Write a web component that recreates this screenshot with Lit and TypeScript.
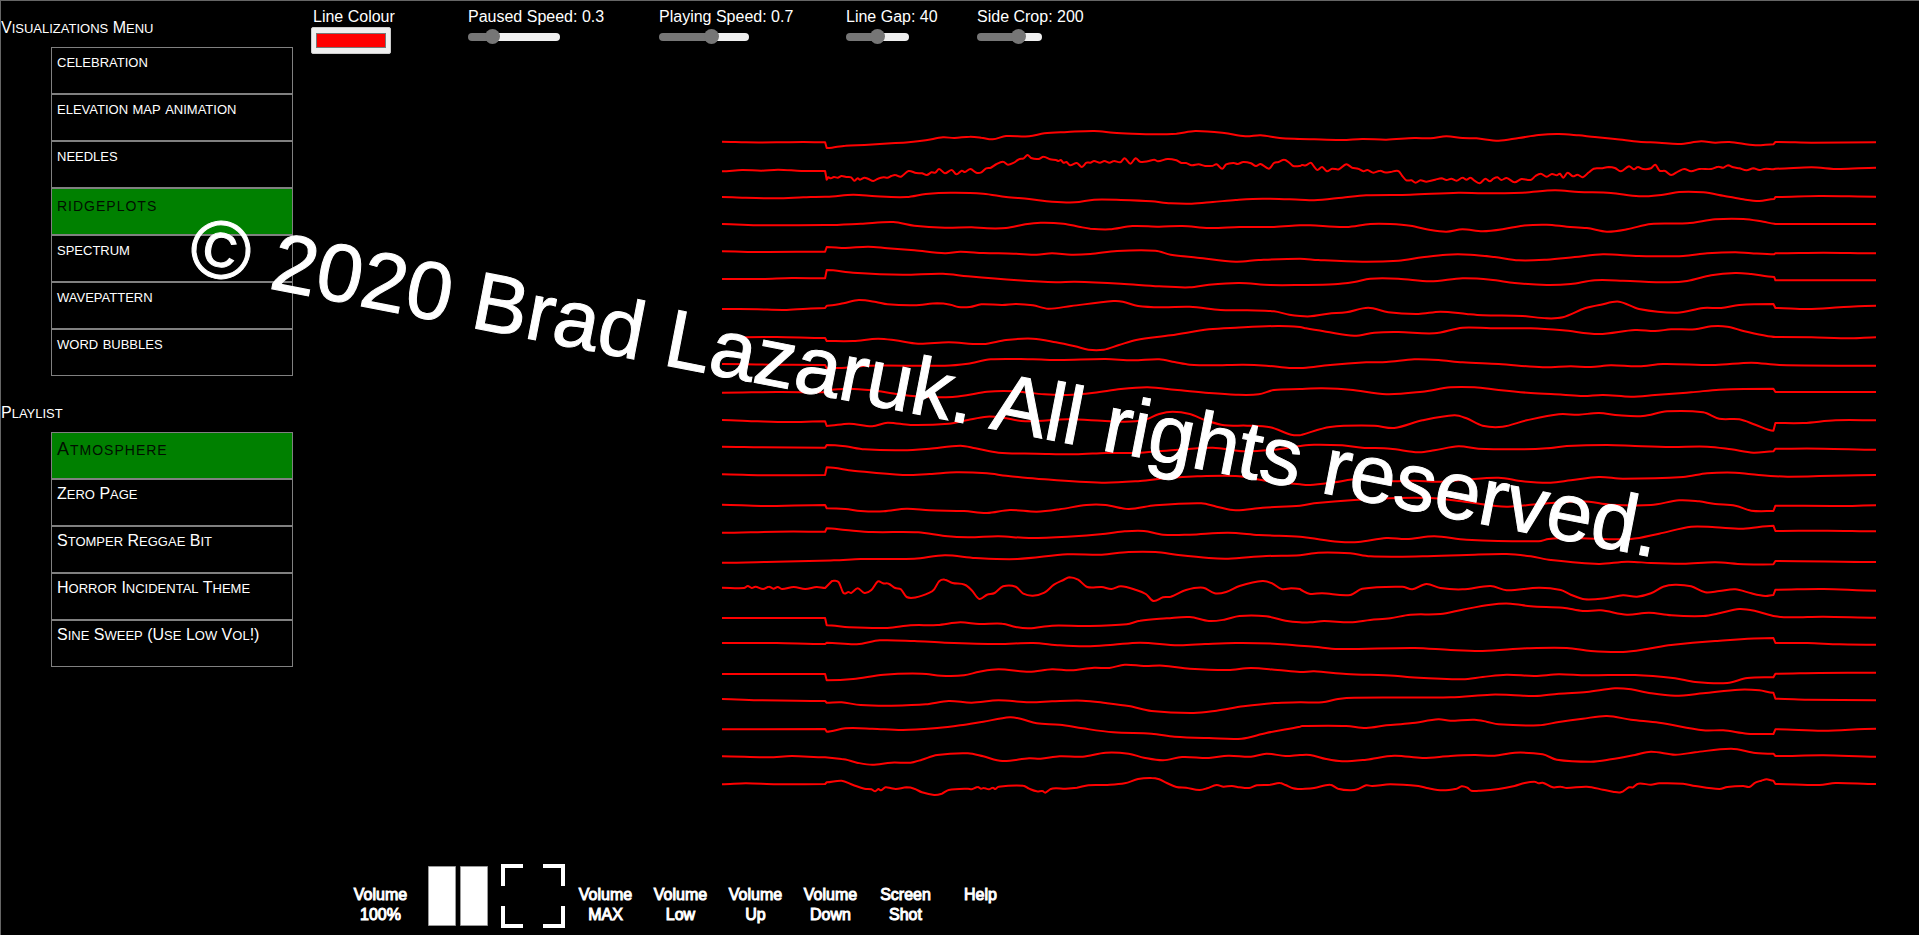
import { LitElement, html, svg, css } from "lit";
import { customElement, property, state } from "lit/decorators.js";
import { classMap } from "lit/directives/class-map.js";

interface Trace {
  top: number;
  a: string;
  b: string;
}

interface Slider {
  id: string;
  label: string;
  min: number;
  max: number;
  step: number;
  value: number;
}

/* Samples of each ridge: "a" is the first half, "b" the second; "|" marks a hard edge of the crop. */
const TRACES: Trace[] = [
  { top: 110,
    a: "57,95 120,97 200,97 270,96 327,97 | 331,114 345,113 380,107 430,105 500,100 545,97 590,91 635,82 665,84 705,80 735,83 765,88 800,78 860,79 900,70 960,66 1030,63 1080,68 1130,71 1190,73 1245,71 1295,63 1370,69 1425,79 1465,76 1515,84 1568,87",
    b: "60,88 130,90 180,87 240,89 310,84 350,85 390,79 430,84 465,85 520,92 570,84 620,75 670,72 720,76 760,81 810,87 870,95 920,98 970,102 1025,94 1060,98 1095,96 1160,106 1205,103 | 1210,96 1300,98 1461,97" },
  { top: 110,
    a: "57,184 110,180 160,182 205,179 265,183 327,183 | 331,209 335,202 342,205 350,201 360,203 370,198 382,201 395,202 403,212 412,205 418,209 430,203 440,207 453,213 465,206 480,202 490,203 500,198 510,195 525,200 545,183 565,189 580,190 593,195 605,187 615,188 625,177 640,190 658,180 670,193 684,182 692,186 707,177 722,188 735,187 748,175 760,173 775,162 792,155 805,164 820,158 833,148 846,145 856,135 865,144 885,147 898,140 915,148 930,150 937,153 943,150 950,158 958,156 967,166 985,159 998,171 1010,158 1020,158 1030,153 1045,158 1057,153 1070,158 1082,153 1098,157 1110,145 1125,161 1138,145 1150,155 1170,154 1187,149 1197,154 1222,147 1245,151 1258,159 1270,159 1285,166 1303,163 1320,168 1340,167 1350,163 1365,176 1375,163 1395,159 1405,162 1420,156 1440,160 1453,168 1465,162 1487,176 1500,159 1512,156 1527,149 1540,158 1550,168 1568,168",
    b: "30,165 40,166 52,158 60,170 68,180 80,171 92,184 105,176 122,178 140,163 155,173 170,176 183,184 193,180 208,188 225,182 235,187 250,186 270,183 280,198 290,211 303,211 313,218 325,211 340,215 362,209 378,205 390,210 402,206 415,212 430,203 440,209 450,203 460,212 473,220 487,206 498,214 507,206 517,202 527,210 540,204 560,217 577,207 600,210 612,198 625,191 640,200 653,192 665,196 673,191 681,203 692,188 705,199 717,194 730,202 745,187 757,176 775,175 795,171 810,174 825,184 845,169 857,178 867,171 880,177 900,175 911,164 921,182 935,183 950,195 968,184 983,177 1000,184 1020,177 1050,177 1068,170 1080,173 1092,166 1105,172 1120,175 1138,181 1155,175 1170,180 1185,176 1205,178 | 1210,176 1300,172 1370,177 1461,173" },
  { top: 110,
    a: "57,261 120,263 200,265 270,262 327,260 | 331,260 400,254 460,259 540,261 590,252 655,248 740,251 800,261 860,267 920,275 980,277 1030,269 1100,270 1180,274 1230,280 1285,281 1340,276 1400,270 1470,266 1568,269",
    b: "60,271 130,263 190,256 300,254 420,248 480,250 580,248 660,241 720,246 800,249 870,259 930,254 970,246 1030,247 1080,257 1130,268 1170,273 1207,267 | 1210,261 1320,258 1461,260" },
  { top: 110,
    a: "57,342 160,346 327,345 | 331,345 420,341 505,336 560,347 640,353 710,352 750,355 800,354 850,343 890,338 950,341 990,350 1020,356 1070,358 1130,348 1200,350 1260,348 1330,354 1410,351 1500,351 1568,346",
    b: "50,346 140,351 200,342 250,342 300,347 350,360 390,365 430,358 480,364 530,358 580,347 640,344 690,350 740,354 790,365 840,358 900,342 990,340 1060,328 1130,327 1180,335 1207,341 | 1210,342 1461,342" },
  { top: 110,
    a: "57,424 160,426 327,425 | 331,411 380,414 440,410 490,415 560,421 640,430 680,425 740,429 820,431 880,434 920,430 970,434 1020,432 1090,423 1190,422 1230,434 1300,443 1400,455 1460,450 1568,446",
    b: "70,450 180,455 270,452 330,442 390,434 450,434 510,441 570,451 640,449 710,441 780,433 870,438 980,438 1040,430 1110,427 1150,430 1207,433 | 1210,430 1330,428 1461,430" },
  { top: 110,
    a: "57,507 160,507 240,504 327,505 | 331,480 400,488 530,494 635,491 700,499 830,511 930,517 980,515 1100,521 1200,529 1280,532 1330,524 1410,519 1490,525 1568,525",
    b: "110,523 160,516 200,506 270,506 350,514 430,505 500,509 560,519 640,525 700,522 760,511 830,512 940,517 990,513 1050,496 1110,489 1150,492 1207,501 | 1210,511 1461,511" },
  { top: 110,
    a: "57,597 150,598 220,600 280,596 327,594 | 331,587 375,580 415,570 460,576 490,583 560,586 620,580 655,584 675,591 705,591 735,583 790,585 825,582 870,586 910,596 970,588 1080,573 1105,575 1145,588 1210,592 1280,590 1360,600 1430,601 1500,604 1540,614 1568,618",
    b: "50,619 95,611 140,607 195,593 245,607 320,612 375,605 440,612 480,616 580,618 640,625 680,622 735,595 775,584 820,575 870,597 965,608 1030,594 1075,594 1120,585 1205,582 | 1210,594 1290,597 1370,592 1461,587" },
  { top: 110,
    a: "57,682 200,681 327,684 | 331,693 400,693 465,686 510,691 570,701 650,697 740,702 800,690 870,686 930,697 980,709 1015,719 1055,719 1095,705 1140,690 1230,676 1330,658 1400,653 1510,648 1568,651",
    b: "40,655 90,665 160,677 210,668 270,666 360,670 430,653 500,655 600,655 680,661 770,672 860,660 910,663 950,658 1010,658 1050,649 1090,650 1130,663 1180,676 1210,681 | 1220,681 1300,682 1400,685 1461,682" },
  { top: 340,
    a: "57,72 200,74 327,75 | 331,84 380,83 440,77 640,77 700,71 760,58 870,58 940,60 1060,57 1130,61 1200,58 1240,66 1280,74 1340,76 1420,74 1480,77 1540,84 1568,84",
    b: "40,83 100,75 190,67 240,66 310,58 370,60 430,67 520,72 630,82 700,79 750,81 800,76 870,79 930,72 1060,75 1150,68 1220,75 1461,77" },
  { top: 340,
    a: "57,158 200,156 327,157 | 331,150 390,146 450,151 520,163 590,171 660,171 700,165 750,155 820,154 900,163 960,165 1030,158 1100,147 1170,142 1240,149 1330,159 1400,164 1460,163 1500,150 1568,147",
    b: "80,145 150,149 240,163 330,155 400,142 460,142 520,150 600,159 680,164 730,168 780,165 850,170 910,165 1000,157 1070,149 1205,146 | 1210,156 1461,156" },
  { top: 340,
    a: "57,240 150,244 230,246 327,244 | 331,258 390,251 450,259 490,248 550,255 650,251 700,240 750,230 790,233 850,244 960,238 1050,242 1110,245 1160,240 1200,222 1235,215 1280,222 1320,240 1370,256 1430,257 1490,262 1545,284 1568,286",
    b: "30,284 100,261 210,257 260,264 330,241 410,226 440,235 480,257 530,260 590,241 670,223 720,224 770,219 820,226 880,228 940,214 1030,217 1070,236 1120,238 1160,254 1205,272 | 1210,249 1280,249 1360,241 1461,241" },
  { top: 340,
    a: "57,320 160,322 327,323 | 331,315 380,319 430,328 530,331 600,326 680,317 720,325 780,338 880,341 980,343 1060,339 1150,338 1250,329 1340,323 1420,334 1500,329 1568,318",
    b: "60,314 130,316 180,323 250,326 320,337 360,331 420,319 470,326 570,328 640,325 690,318 790,315 860,318 950,321 1040,320 1100,328 1155,338 1205,334 | 1210,326 1330,326 1461,329" },
  { top: 340,
    a: "57,403 160,406 327,405 | 331,382 400,392 530,405 600,402 670,397 750,400 800,407 880,416 1050,428 1150,423 1220,414 1300,409 1400,408 1480,422 1568,433",
    b: "50,435 110,427 170,417 250,424 310,422 370,425 430,420 520,413 580,424 650,428 700,421 770,411 830,416 980,411 1040,400 1110,398 1150,403 1240,410 1461,405" },
  { top: 340,
    a: "57,494 160,498 327,495 | 331,505 380,507 420,513 480,514 540,506 600,511 690,513 750,519 810,510 880,515 940,508 1010,495 1060,495 1120,507 1190,496 1310,490 1350,500 1400,511 1470,503 1568,497",
    b: "60,490 160,480 270,474 360,475 440,486 540,500 620,492 730,484 800,494 900,495 970,481 1020,484 1060,492 1110,497 1150,512 1205,513 | 1210,497 1370,498 1461,496" },
  { top: 340,
    a: "57,578 200,575 327,575 | 331,565 380,570 450,576 570,577 640,588 700,592 780,589 860,594 960,590 1060,581 1110,574 1160,573 1210,584 1280,584 1380,578 1460,585 1568,590",
    b: "50,594 120,605 170,606 240,594 290,597 360,589 440,599 620,604 645,597 700,594 850,597 920,581 1000,560 1060,562 1130,566 1205,557 | 1210,573 1340,572 1461,574" },
  { top: 340,
    a: "57,668 200,665 350,661 420,657 560,656 640,646 720,654 830,657 960,643 1050,644 1120,636 1190,636 1250,645 1330,654 1380,656 1480,648 1568,646",
    b: "70,638 150,640 200,649 330,649 440,645 540,642 600,649 650,660 770,672 840,665 900,669 980,671 1060,667 1130,673 1205,673 | 1210,663 1461,666" },
  { top: 570,
    a: "57,53 115,54 125,48 135,54 145,50 165,57 180,50 192,56 203,51 215,57 245,51 275,57 305,51 327,54 | 345,33 362,36 375,69 388,66 395,69 412,55 430,69 448,60 465,34 478,40 493,41 510,54 525,58 540,81 565,82 600,68 612,58 625,34 640,29 660,39 692,44 710,61 730,87 750,74 770,69 792,49 825,50 845,71 870,77 900,68 925,44 950,30 965,22 988,29 1012,51 1050,51 1075,57 1100,49 1140,60 1165,72 1185,93 1210,82 1230,80 1270,60 1315,53 1345,70 1375,66 1410,48 1470,33 1495,40 1520,57 1545,55 1568,57",
    b: "28,60 48,71 80,70 150,75 180,56 280,50 305,58 340,42 375,54 430,58 500,48 540,61 620,53 675,60 700,74 735,88 790,84 830,76 865,80 900,70 930,50 960,44 1000,49 1035,67 1070,63 1110,58 1150,70 1185,78 1205,75 | 1210,59 1330,57 1461,62" },
  { top: 570,
    a: "57,144 327,144 | 331,166 390,172 490,174 550,166 620,165 680,157 730,162 790,161 825,171 860,175 920,167 1010,168 1115,163 1150,152 1220,145 1280,141 1330,153 1370,149 1410,138 1480,139 1530,152 1568,157",
    b: "50,157 85,153 150,157 200,150 250,145 300,134 375,132 430,119 500,104 550,101 600,109 680,113 730,123 775,121 840,134 895,128 950,136 1030,138 1070,130 1120,117 1160,123 1210,139 1250,142 1330,140 1461,143" },
  { top: 570,
    a: "57,219 200,219 327,222 | 331,218 410,223 470,211 560,213 640,218 780,222 870,219 940,226 1010,229 1080,224 1150,218 1250,226 1320,222 1400,219 1500,221 1568,227",
    b: "60,230 120,237 310,234 400,240 480,243 590,235 690,234 750,243 830,246 890,237 950,225 1060,213 1205,204 | 1210,219 1290,219 1370,223 1461,224" },
  { top: 570,
    a: "57,312 327,312 | 331,331 400,327 480,314 580,311 630,317 690,316 730,305 780,298 860,305 920,298 970,301 1030,293 1070,294 1110,284 1160,288 1210,287 1280,296 1380,300 1440,294 1510,300 1568,306",
    b: "60,304 140,312 260,317 300,322 430,328 480,321 540,314 610,318 670,313 740,316 860,315 960,325 1010,336 1090,339 1140,324 1205,322 | 1210,311 1320,309 1461,308" },
  { top: 570,
    a: "57,387 160,391 327,393 | 331,398 370,397 420,405 500,407 590,403 650,393 710,398 780,391 860,397 920,394 1000,392 1060,399 1120,408 1180,423 1290,429 1350,422 1420,409 1500,399 1568,397",
    b: "80,397 120,387 160,383 400,382 500,374 550,375 610,378 670,371 740,366 810,355 850,358 900,370 960,377 1030,370 1120,359 1170,361 1205,368 | 1210,386 1290,389 1461,391" },
  { top: 570,
    a: "57,478 327,477 | 331,485 380,475 450,476 530,480 620,474 680,466 740,455 810,442 840,447 880,460 940,464 1000,475 1080,487 1180,491 1240,500 1330,504 1415,506 1480,489 1568,470",
    b: "30,468 140,468 190,474 240,466 300,460 370,448 400,452 460,449 490,455 520,463 620,466 670,456 730,446 790,438 850,449 920,458 1030,481 1080,481 1140,491 1205,492 | 1210,478 1330,482 1461,476" },
  { top: 570,
    a: "57,559 180,562 240,558 327,562 | 370,567 410,578 450,584 500,578 550,578 580,569 620,555 700,550 740,559 790,573 860,565 890,566 940,559 1000,560 1060,548 1120,551 1160,563 1210,571 1260,561 1330,564 1380,557 1440,560 1480,551 1530,558 1568,555",
    b: "50,555 90,567 130,574 190,569 260,557 330,564 400,558 460,555 510,557 560,548 630,553 665,569 750,575 800,568 860,555 900,545 960,554 1010,547 1100,536 1160,549 1205,551 | 1210,558 1330,556 1461,560" },
  { top: 570,
    a: "57,643 120,640 200,643 327,642 | 331,637 370,632 400,645 430,656 448,658 458,664 466,657 473,661 485,652 500,655 512,657 540,652 560,656 580,667 612,675 632,671 650,660 700,656 710,658 726,651 734,656 742,654 755,658 765,653 772,657 780,650 845,647 860,656 880,664 895,663 902,668 915,658 930,655 955,656 985,653 1015,646 1060,645 1110,640 1145,627 1180,624 1200,628 1220,639 1245,651 1270,653 1305,660 1325,655 1350,645 1368,650 1390,648 1410,652 1435,654 1455,646 1490,644 1515,639 1530,645 1550,655 1568,657",
    b: "28,657 60,654 100,644 120,656 150,661 168,658 190,646 205,648 250,643 320,648 345,655 380,661 415,656 428,649 442,653 452,662 475,662 520,657 560,648 585,639 610,635 620,640 630,638 655,652 675,650 690,654 740,650 780,659 805,665 825,667 845,652 855,652 868,641 900,644 920,640 980,641 1010,648 1070,657 1090,651 1130,648 1145,651 1160,638 1175,632 1188,628 1205,632 | 1210,642 1320,645 1360,639 1461,642" },
];

const HALVES = [
  { x: 700, scale: 600 / 1568 },
  { x: 1290, scale: 629 / 1568 },
];

function tracePath(trace: Trace): string {
  const runs: number[][][] = [[]];
  [trace.a, trace.b].forEach((half, index) => {
    const { x, scale } = HALVES[index];
    for (const token of half.split(" ")) {
      if (token === "|") {
        runs.push([]);
        continue;
      }
      const [px, py] = token.split(",").map(Number);
      runs[runs.length - 1].push([x + px * scale, trace.top + py / 3]);
    }
  });
  const f = (n: number) => n.toFixed(1);
  let d = "";
  for (const run of runs) {
    d += `${d ? "L" : "M"}${f(run[0][0])} ${f(run[0][1])}`;
    const slope = (i: number) => {
      if (i === 0 || i === run.length - 1) return 0;
      return (run[i + 1][1] - run[i - 1][1]) / (run[i + 1][0] - run[i - 1][0]);
    };
    for (let i = 1; i < run.length; i++) {
      const [x0, y0] = run[i - 1];
      const [x1, y1] = run[i];
      const third = (x1 - x0) / 3;
      d += `C${f(x0 + third)} ${f(y0 + slope(i - 1) * third)} ${f(x1 - third)} ${f(y1 - slope(i) * third)} ${f(x1)} ${f(y1)}`;
    }
  }
  return d;
}

/* Small capitals: every run of lower-case letters becomes smaller upper case. */
function smallCaps(text: string) {
  return text
    .split(/([a-z]+)/)
    .filter(Boolean)
    .map((part) => (/[a-z]/.test(part) ? html`<span class="sc">${part}</span>` : part));
}

@customElement("menu-list")
export class MenuList extends LitElement {
  @property() heading = "";
  @property({ type: Array }) items: string[] = [];
  @property() selected = "";

  static styles = css`
    :host { display: block; }
    h2 { margin: 0 0 9px; font-size: 16px; line-height: 18px; font-weight: 400; }
    ul { list-style: none; margin: 0; padding: 0 0 0 50px; }
    button {
      display: flex;
      align-items: flex-start;
      width: 100%;
      height: 47px;
      padding: 5px;
      border: 1px solid #808080;
      background: #000;
      color: #fff;
      font: inherit;
      line-height: 18px;
      text-align: left;
      white-space: pre;
      cursor: pointer;
    }
    .sc { font-size: 13px; text-transform: uppercase; }
    .on { padding-top: 6px; background: #008000; color: #001000; font-size: 18px; line-height: 20px; letter-spacing: 1px; }
    .on .sc { font-size: 14px; }
  `;

  render() {
    return html`
      <h2>${smallCaps(this.heading)}</h2>
      <ul>
        ${this.items.map(
          (item) => html`<li>
            <button
              type="button"
              class=${classMap({ on: item === this.selected })}
              @click=${() => (this.selected = item)}
            ><span>${smallCaps(item)}</span></button>
          </li>`
        )}
      </ul>
    `;
  }
}

@customElement("app-root")
export class AppRoot extends LitElement {
  @state() private colour = "#ff0000";
  @state() private sliders: Slider[] = [
    { id: "paused", label: "Paused Speed", min: 0.1, max: 1, step: 0.1, value: 0.3 },
    { id: "playing", label: "Playing Speed", min: 0.1, max: 1.1, step: 0.1, value: 0.7 },
    { id: "gap", label: "Line Gap", min: 10, max: 70, step: 1, value: 40 },
    { id: "crop", label: "Side Crop", min: 0, max: 300, step: 10, value: 200 },
  ];

  static styles = css`
    :host {
      display: flex;
      position: relative;
      box-sizing: border-box;
      min-height: 100vh;
      border-top: 1px solid #666;
      border-left: 1px solid #666;
      background: #000;
      color: #fff;
      font: 16px/18px "Liberation Sans", Arial, sans-serif;
      overflow: hidden;
    }
    nav { flex: none; width: 292px; padding-top: 18px; display: flex; flex-direction: column; gap: 28px; }
    main { flex: 1; min-width: 0; display: flex; flex-direction: column; }
    .settings { display: flex; padding: 7px 0 0 18px; height: 109px; box-sizing: border-box; }
    .field { display: flex; flex-direction: column; align-items: flex-start; white-space: nowrap; }
    .field label { padding-left: 1px; }
    .colour { width: 156px; }
    .colour label { padding-left: 2px; }
    .paused { width: 191px; }
    .playing { width: 187px; }
    .gap { width: 131px; }
    .crop { width: 136px; }
    .swatch {
      appearance: none;
      box-sizing: border-box;
      width: 80px;
      height: 27px;
      margin: 1px 0 0;
      padding: 5px 4px;
      border: 1px solid #ccc;
      border-radius: 2px;
      background: #efefef;
    }
    .swatch::-webkit-color-swatch-wrapper { padding: 0; }
    .swatch::-webkit-color-swatch { border: 1px solid #777; border-radius: 0; }
    .slider { appearance: none; width: 48%; height: 16px; margin: 3px 1px; background: none; }
    .slider::-webkit-slider-runnable-track {
      height: 8px;
      border-radius: 4px;
      background: linear-gradient(90deg, #767676 var(--fill), #efefef var(--fill));
    }
    .slider::-webkit-slider-thumb {
      appearance: none;
      width: 15px;
      height: 15px;
      margin-top: -4px;
      border-radius: 50%;
      background: #767676;
    }
    .stage { display: block; margin: 0 43px 0 429px; }
    .stage svg { display: block; width: 100%; height: auto; }
    .trace { fill: none; stroke-width: 2; stroke-linejoin: round; }
    .watermark {
      position: absolute;
      left: 185px;
      top: 202px;
      margin: 0;
      font-size: 82px;
      line-height: 82px;
      white-space: nowrap;
      -webkit-text-stroke: 1px #fff;
      transform: rotate(11deg);
      transform-origin: 0 69px;
      pointer-events: none;
    }
    .controls { display: flex; align-items: flex-start; margin-top: auto; padding: 0 0 7px 50px; }
    .controls button, .controls output {
      display: flex;
      flex-direction: column;
      justify-content: flex-start;
      width: 75px;
      height: 64px;
      padding: 21px 8px 0;
      box-sizing: border-box;
      border: 0;
      background: none;
      color: #fff;
      font: inherit;
      line-height: 20px;
      text-align: center;
      -webkit-text-stroke: 1px #fff;
      cursor: pointer;
    }
    .controls .icon { padding: 0 0 0 8px; }
    .icon svg { display: block; }
  `;

  private setSlider(id: string, event: Event) {
    const value = Number((event.target as HTMLInputElement).value);
    this.sliders = this.sliders.map((s) => (s.id === id ? { ...s, value } : s));
  }

  render() {
    return html`
      <nav>
        <menu-list
          heading="Visualizations Menu"
          selected="ridgeplots"
          .items=${["celebration", "elevation map animation", "needles", "ridgeplots", "spectrum", "wavepattern", "word bubbles"]}
        ></menu-list>
        <menu-list
          heading="Playlist"
          selected="Atmosphere"
          .items=${["Atmosphere", "Zero Page", "Stomper Reggae Bit", "Horror Incidental Theme", "Sine Sweep (Use Low Vol!)"]}
        ></menu-list>
      </nav>
      <main>
        <form class="settings">
          <div class="field colour">
            <label for="colour">Line Colour</label>
            <input
              id="colour"
              class="swatch"
              type="color"
              .value=${this.colour}
              @input=${(e: Event) => (this.colour = (e.target as HTMLInputElement).value)}
            />
          </div>
          ${this.sliders.map(
            (s) => html`<div class="field ${s.id}">
              <label for=${s.id}>${s.label}: ${s.value}</label>
              <input
                id=${s.id}
                class="slider"
                type="range"
                min=${s.min}
                max=${s.max}
                step=${s.step}
                .value=${String(s.value)}
                style="--fill: ${((s.value - s.min) / (s.max - s.min)) * 100}%"
                @input=${(e: Event) => this.setSlider(s.id, e)}
              />
            </div>`
          )}
        </form>
        <div class="stage">
          <svg viewBox="722 110 1154 700" role="img" aria-label="Ridgeplots">
            ${TRACES.map((t) => svg`<path class="trace" stroke=${this.colour} d=${tracePath(t)} />`)}
          </svg>
        </div>
        <div class="controls">
          <output>Volume 100%</output>
          <button type="button" class="icon" aria-label="Pause">
            <svg width="66" height="64" viewBox="0 0 66 64" fill="#fff" stroke="#999">
              <path d="M2.500 2.500h27v59h-27zM34.500 2.500h27v59h-27z" />
            </svg>
          </button>
          <button type="button" class="icon" aria-label="Full screen">
            <svg width="64" height="64" viewBox="0 0 64 64" fill="none" stroke="#fff" stroke-width="4">
              <path d="M2 22V2H22M42 2H62V22M62 42V62H42M22 62H2V42" />
            </svg>
          </button>
          <button type="button">Volume MAX</button>
          <button type="button">Volume Low</button>
          <button type="button">Volume Up</button>
          <button type="button">Volume Down</button>
          <button type="button">Screen Shot</button>
          <button type="button">Help</button>
        </div>
      </main>
      <p class="watermark">© 2020 Brad Lazaruk. All rights reserved.</p>
    `;
  }
}
